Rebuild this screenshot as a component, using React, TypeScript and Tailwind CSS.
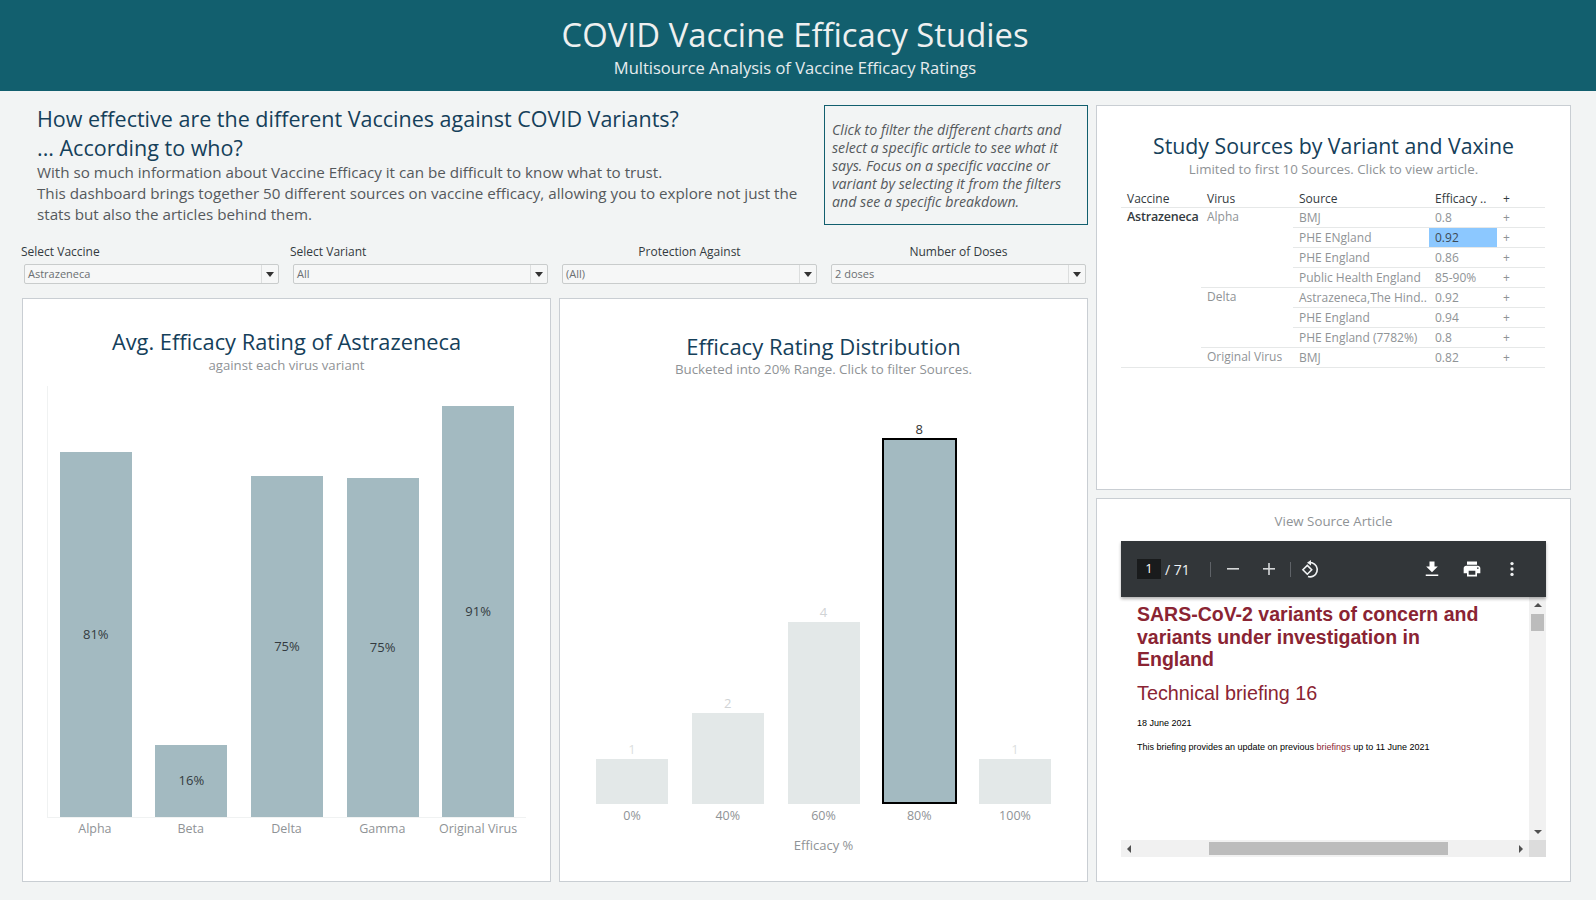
import React from 'react';

const font = { fontFamily: '"Open Sans", sans-serif' };

const filters = [
  { label: 'Select Vaccine', value: 'Astrazeneca', labelClass: '-ml-[3px] text-left' },
  { label: 'Select Variant', value: 'All', labelClass: '-ml-[3px] text-left' },
  { label: 'Protection Against', value: '(All)', labelClass: 'text-center' },
  { label: 'Number of Doses', value: '2 doses', labelClass: 'text-center' }
];

const variantBars = [
  { name: 'Alpha', pct: '81%', bar: 'h-[365px]', labelPos: 'mb-[175px]' },
  { name: 'Beta', pct: '16%', bar: 'h-[72px]', labelPos: 'mb-[29px]' },
  { name: 'Delta', pct: '75%', bar: 'h-[341px]', labelPos: 'mb-[163px]' },
  { name: 'Gamma', pct: '75%', bar: 'h-[339px]', labelPos: 'mb-[162px]' },
  { name: 'Original Virus', pct: '91%', bar: 'h-[411px]', labelPos: 'mb-[198px]' }
];

const buckets = [
  { name: '0%', count: '1', bar: 'h-[45px] w-[72px] bg-[#e3e8e8]', num: 'mb-[2px] text-[#dcdfe0]' },
  { name: '40%', count: '2', bar: 'h-[91px] w-[72px] bg-[#e3e8e8]', num: 'mb-[2px] text-[#d0d3d5]' },
  { name: '60%', count: '4', bar: 'h-[182px] w-[72px] bg-[#e3e8e8]', num: 'mb-[2px] text-[#d0d3d5]' },
  { name: '80%', count: '8', bar: 'h-[366px] w-[75px] border-2 border-black bg-[#a3bac1]', num: 'mb-[1px] text-[#333333]' },
  { name: '100%', count: '1', bar: 'h-[45px] w-[72px] bg-[#e3e8e8]', num: 'mb-[2px] text-[#dcdfe0]' }
];

const sourceGroups = [
  {
    virus: 'Alpha',
    rows: [
      { source: 'BMJ', value: '0.8' },
      { source: 'PHE ENgland', value: '0.92', selected: true },
      { source: 'PHE England', value: '0.86' },
      { source: 'Public Health England', value: '85-90%' }
    ]
  },
  {
    virus: 'Delta',
    rows: [
      { source: 'Astrazeneca,The Hind..', value: '0.92' },
      { source: 'PHE England', value: '0.94' },
      { source: 'PHE England (7782%)', value: '0.8' }
    ]
  },
  {
    virus: 'Original Virus',
    rows: [{ source: 'BMJ', value: '0.82' }]
  }
];

const Select = ({ value }: { value: string }) => (
  <div className="flex h-[20px] items-stretch rounded-[2px] border border-[#c9cccc] bg-[#f6f7f7] text-[11px] text-[#6b6f72]">
    <span className="flex-1 pl-[3px] leading-[18px]">{value}</span>
    <span className="flex w-[17px] items-center justify-center border-l border-[#dcdede]">
      <span className="h-0 w-0 border-x-[4px] border-t-[5px] border-x-transparent border-t-[#333333]" />
    </span>
  </div>
);

const AvgEfficacyCard = () => (
  <div className="flex h-[584px] w-[529px] flex-col border border-[#c9ced3] bg-white">
    <div className="mt-[28px] text-center text-[21.8px] leading-[30px] text-[#15405a]">Avg. Efficacy Rating of Astrazeneca</div>
    <div className="text-center text-[13.2px] leading-[16px] text-[#8f9396]">against each virus variant</div>
    <div className="mt-[13px] ml-[24px] flex h-[432px] w-[479px] items-end border-b border-l border-[#f0f2f2]">
      {variantBars.map(item => (
        <div key={item.name} className="flex flex-1 justify-center">
          <div className={`flex w-[72px] items-end justify-center bg-[#a3bac1] ${item.bar}`}>
            <span className={`text-[13px] leading-[16px] text-[#333a40] ${item.labelPos}`}>{item.pct}</span>
          </div>
        </div>
      ))}
    </div>
    <div className="ml-[24px] flex w-[479px]">
      {variantBars.map(item => (
        <div key={item.name} className="flex-1 pt-[3px] text-center text-[12.5px] leading-[16px] whitespace-nowrap text-[#8f9396]">
          {item.name}
        </div>
      ))}
    </div>
  </div>
);

const DistributionCard = () => (
  <div className="flex h-[584px] w-[529px] flex-col border border-[#c9ced3] bg-white">
    <div className="mt-[32px] text-center text-[22px] leading-[30px] text-[#15405a]">Efficacy Rating Distribution</div>
    <div className="text-center text-[13.3px] leading-[16px] text-[#8f9396]">Bucketed into 20% Range. Click to filter Sources.</div>
    <div className="mt-[37px] ml-[36px] flex h-[390px] w-[455px] items-end justify-between">
      {buckets.map(item => (
        <div key={item.name} className="flex w-[72px] flex-col items-center">
          <span className={`text-[13px] leading-[16px] ${item.num}`}>{item.count}</span>
          <div className={`shrink-0 ${item.bar}`} />
        </div>
      ))}
    </div>
    <div className="ml-[36px] flex w-[455px] justify-between">
      {buckets.map(item => (
        <div key={item.name} className="w-[72px] pt-[4px] text-center text-[12.5px] leading-[16px] text-[#8f9396]">
          {item.name}
        </div>
      ))}
    </div>
    <div className="mt-[13px] text-center text-[13px] leading-[16px] text-[#8f9396]">Efficacy %</div>
  </div>
);

const SourcesCard = () => (
  <div className="flex h-[385px] flex-col border border-[#c9ced3] bg-white">
    <div className="mt-[25px] text-center text-[21.3px] leading-[30px] text-[#15405a]">Study Sources by Variant and Vaxine</div>
    <div className="text-center text-[13.3px] leading-[16px] text-[#8f9396]">Limited to first 10 Sources. Click to view article.</div>
    <div className="mt-[11px] ml-[24px] w-[424px] text-[12px]">
      <div className="flex h-[20px] items-center border-b border-[#e6e8e8] pt-[2px] text-[#333a40]">
        <span className="w-[80px] pl-[6px]">Vaccine</span>
        <span className="w-[92px] pl-[6px]">Virus</span>
        <span className="w-[136px] pl-[6px]">Source</span>
        <span className="w-[68px] pl-[6px] whitespace-nowrap">Efficacy ..</span>
        <span className="pl-[6px]">+</span>
      </div>
      <div className="flex border-b border-[#e6e8e8]">
        <div className="w-[80px] pl-[6px] text-[12.5px] leading-[18px] font-semibold tracking-[-0.2px] text-[#333a40]">Astrazeneca</div>
        <div className="flex-1">
          {sourceGroups.map((group, g) => (
            <div key={group.virus} className={`flex ${g < sourceGroups.length - 1 ? 'border-b border-[#e6e8e8]' : ''}`}>
              <div className="w-[92px] pl-[6px] leading-[18px] whitespace-nowrap text-[#8f9396]">{group.virus}</div>
              <div className="flex-1">
                {group.rows.map((row, i) => (
                  <div
                    key={row.source + row.value}
                    className={`flex items-center text-[#8f9396] ${i < group.rows.length - 1 ? 'h-[20px] border-b border-[#e6e8e8]' : 'h-[19px]'}`}
                  >
                    <span className="w-[136px] pl-[6px] whitespace-nowrap">{row.source}</span>
                    <span className={`flex h-[19px] w-[68px] items-center pl-[6px] ${row.selected ? 'bg-[#8cc8ff] text-[#3d4a55]' : ''}`}>{row.value}</span>
                    <span className="pl-[6px]">+</span>
                  </div>
                ))}
              </div>
            </div>
          ))}
        </div>
      </div>
    </div>
  </div>
);

const PdfToolbar = () => (
  <div className="relative z-10 flex h-[56px] items-center bg-[#323639] pl-[16px] shadow-[0_2px_3px_rgba(0,0,0,0.3)]">
    <span className="flex h-[20px] w-[24px] items-center justify-center bg-[#191b1c] text-[13px] text-white">1</span>
    <span className="ml-[4px] w-[45px] text-[14px] text-[#f1f3f4]">/ 71</span>
    <span className="h-[15px] w-px bg-[#5f6368]" />
    <svg className="ml-[13px]" width="18" height="18" viewBox="0 0 18 18" fill="#d6d8d9">
      <rect x="3" y="8" width="12" height="1.6" />
    </svg>
    <svg className="ml-[18px]" width="18" height="18" viewBox="0 0 18 18" fill="#d6d8d9">
      <rect x="3" y="8" width="12" height="1.6" />
      <rect x="8.2" y="3" width="1.6" height="12" />
    </svg>
    <span className="ml-[12px] h-[15px] w-px bg-[#5f6368]" />
    <svg className="ml-[10px]" width="20" height="20" viewBox="0 0 20 20" fill="none" stroke="#f1f3f4" strokeWidth="1.6">
      <path d="M10 1 L6 3.8 L10 6.6 Z" fill="#f1f3f4" stroke="none" />
      <path d="M9 3.8 H11 A7 7 0 1 1 7 17.6" />
      <path d="M6.3 6.4 L10.7 10.8 L6.3 15.2 L1.9 10.8 Z" />
    </svg>
    <svg className="ml-[101px]" width="20" height="20" viewBox="0 0 24 24" fill="#ffffff">
      <path d="M19 9h-4V3H9v6H5l7 7 7-7zM4.5 18.5v2h15v-2h-15z" />
    </svg>
    <svg className="ml-[20px]" width="20" height="20" viewBox="0 0 24 24" fill="#ffffff">
      <path d="M19 8H5c-1.66 0-3 1.34-3 3v6h4v4h12v-4h4v-6c0-1.66-1.34-3-3-3zm-3 11H8v-5h8v5zm3-7c-.55 0-1-.45-1-1s.45-1 1-1 1 .45 1 1-.45 1-1 1zm-1-9H6v4h12V3z" />
    </svg>
    <svg className="ml-[20px]" width="20" height="20" viewBox="0 0 24 24" fill="#f1f3f4">
      <circle cx="12" cy="5.5" r="2" />
      <circle cx="12" cy="12" r="2" />
      <circle cx="12" cy="18.5" r="2" />
    </svg>
  </div>
);

const PdfPage = () => (
  <div className="h-[243px] flex-1 overflow-hidden bg-white pt-[6px] pl-[16px]" style={{ fontFamily: '"Liberation Sans", Arial, sans-serif' }}>
    <div className="text-[19.5px] leading-[22.5px] font-bold text-[#8a2433]">
      SARS-CoV-2 variants of concern and
      <br />
      variants under investigation in
      <br />
      England
    </div>
    <div className="mt-[10px] text-[19.8px] leading-[24px] text-[#8a2433]">Technical briefing 16</div>
    <div className="mt-[12px] text-[9px] leading-[12px] text-black">18 June 2021</div>
    <div className="mt-[12px] text-[9px] leading-[12px] text-black">
      This briefing provides an update on previous <span className="text-[#8a2433]">briefings</span> up to 11 June 2021
    </div>
  </div>
);

const ViewerCard = () => (
  <div className="flex h-[384px] flex-col border border-[#c9ced3] bg-white">
    <div className="mt-[13px] text-center text-[13.3px] leading-[18px] text-[#8f9396]">View Source Article</div>
    <div className="mt-[11px] ml-[24px] w-[425px]">
      <PdfToolbar />
      <div className="flex">
        <PdfPage />
        <div className="flex w-[17px] flex-col items-center bg-[#f1f1f1]">
          <span className="mt-[6px] h-0 w-0 border-x-[4px] border-b-[4px] border-x-transparent border-b-[#505050]" />
          <span className="mt-[7px] h-[17px] w-[13px] bg-[#bcbcbc]" />
          <span className="mt-auto mb-[6px] h-0 w-0 border-x-[4px] border-t-[4px] border-x-transparent border-t-[#505050]" />
        </div>
      </div>
      <div className="flex h-[17px]">
        <div className="flex flex-1 items-center bg-[#f1f1f1]">
          <span className="ml-[6px] h-0 w-0 border-y-[4px] border-r-[4px] border-y-transparent border-r-[#505050]" />
          <span className="ml-[78px] h-[13px] w-[239px] bg-[#bcbcbc]" />
          <span className="mr-[6px] ml-auto h-0 w-0 border-y-[4px] border-l-[4px] border-y-transparent border-l-[#505050]" />
        </div>
        <div className="w-[17px] bg-[#dcdcdc]" />
      </div>
    </div>
  </div>
);

export default function App() {
  return (
    <div className="flex h-[900px] w-[1596px] flex-col overflow-hidden bg-[#f2f4f4]" style={font}>
      <header className="flex h-[91px] flex-col items-center bg-[#125f6e] pr-[6px]">
        <div className="mt-[13px] text-[32.8px] leading-[44px] text-[#eef0f0]">COVID Vaccine Efficacy Studies</div>
        <div className="text-[16.5px] leading-[22px] text-[#e6ecee]">Multisource Analysis of Vaccine Efficacy Ratings</div>
      </header>

      <main className="flex gap-[8px] pt-[14px] pl-[22px]">
        <div className="flex w-[1066px] flex-col">
          <div className="flex h-[120px]">
            <div className="-mt-[1px] w-[802px] pl-[15px]">
              <div className="text-[21.5px] leading-[29px] text-[#15405a]">
                How effective are the different Vaccines against COVID Variants?
                <br />
                ... According to who?
              </div>
              <div className="text-[15.2px] leading-[21px] text-[#55595c]">
                With so much information about Vaccine Efficacy it can be difficult to know what to trust.
                <br />
                This dashboard brings together 50 different sources on vaccine efficacy, allowing you to explore not just the
                <br />
                stats but also the articles behind them.
              </div>
            </div>
            <div className="h-[120px] w-[264px] border border-[#125f6e] pt-[15px] pl-[7px] text-[14.2px] leading-[18px] whitespace-nowrap text-[#55595c] italic">
              Click to filter the different charts and
              <br />
              select a specific article to see what it
              <br />
              says. Focus on a specific vaccine or
              <br />
              variant by selecting it from the filters
              <br />
              and see a specific breakdown.
            </div>
          </div>

          <div className="mt-[19px] grid grid-cols-4 gap-x-[14px] px-[2px]">
            {filters.map(filter => (
              <div key={filter.label} className="flex w-[255px] flex-col">
                <div className={`mb-[4px] text-[12px] leading-[16px] font-medium text-[#333a40] ${filter.labelClass}`}>{filter.label}</div>
                <Select value={filter.value} />
              </div>
            ))}
          </div>

          <div className="mt-[14px] flex gap-[8px]">
            <AvgEfficacyCard />
            <DistributionCard />
          </div>
        </div>

        <div className="flex w-[475px] flex-col gap-[8px]">
          <SourcesCard />
          <ViewerCard />
        </div>
      </main>
    </div>
  );
}
